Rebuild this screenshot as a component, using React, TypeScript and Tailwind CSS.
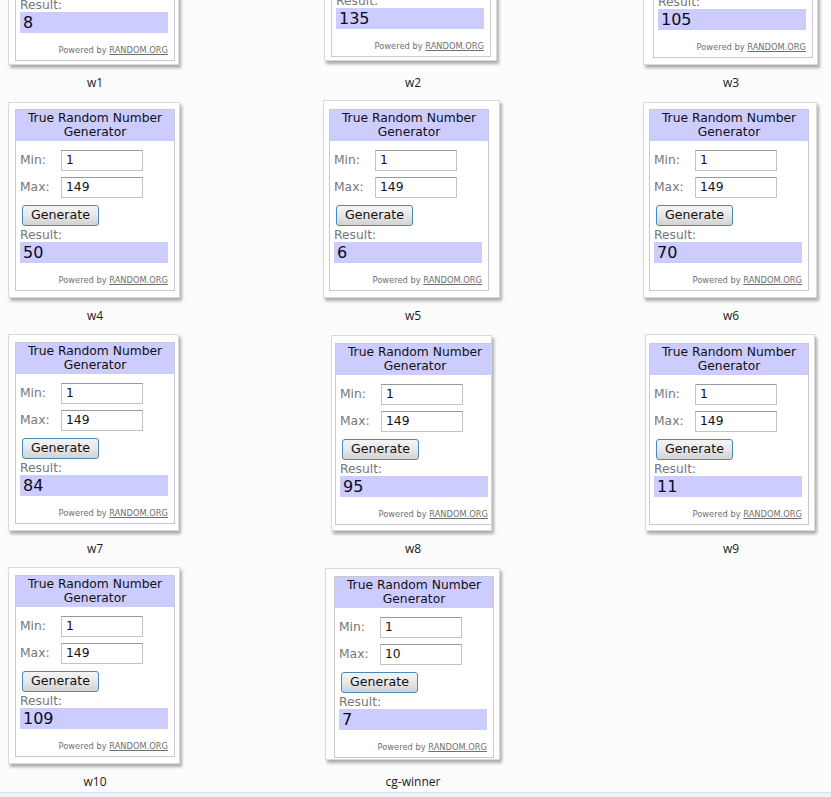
import React from "react"

type Thumb = {
  name: string
  min: string
  max: string
  result: string
  // card placement inside its cell, written out as whole class names
  card: string
  pad: string
}

const rows: Thumb[][] = [
  [
    { name: "w1", min: "1", max: "149", result: "8", card: "ml-[8px] w-[171px] h-[196px]", pad: "pl-[6px] pt-[9px]" },
    { name: "w2", min: "1", max: "149", result: "135", card: "ml-[6px] w-[173px] h-[192px] mb-[4px]", pad: "pl-[6px] pt-[5px]" },
    { name: "w3", min: "1", max: "149", result: "105", card: "ml-[7px] w-[175px] h-[196px]", pad: "pl-[9px] pt-[6px]" },
  ],
  [
    { name: "w4", min: "1", max: "149", result: "50", card: "ml-[8px] w-[172px] h-[196px]", pad: "pl-[6px] pt-[6px]" },
    { name: "w5", min: "1", max: "149", result: "6", card: "ml-[5px] w-[177px] h-[198px] -mt-[2px]", pad: "pl-[5px] pt-[8px]" },
    { name: "w6", min: "1", max: "149", result: "70", card: "ml-[7px] w-[174px] h-[196px]", pad: "pl-[5px] pt-[6px]" },
  ],
  [
    { name: "w7", min: "1", max: "149", result: "84", card: "ml-[8px] w-[171px] h-[197px]", pad: "pl-[6px] pt-[7px]" },
    { name: "w8", min: "1", max: "149", result: "95", card: "ml-[13px] w-[161px] h-[196px]", pad: "pl-[3px] pt-[7px]" },
    { name: "w9", min: "1", max: "149", result: "11", card: "ml-[9px] w-[170px] h-[197px]", pad: "pl-[3px] pt-[8px]" },
  ],
  [
    { name: "w10", min: "1", max: "149", result: "109", card: "ml-[8px] w-[172px] h-[197px]", pad: "pl-[6px] pt-[7px]" },
    { name: "cg-winner", min: "1", max: "10", result: "7", card: "ml-[7px] w-[175px] h-[192px] mb-[4px]", pad: "pl-[8px] pt-[7px]" },
  ],
]

const Widget = ({ min, max, result }: { min: string; max: string; result: string }) => (
  <div className="flex h-[182px] w-[160px] shrink-0 flex-col border border-[#c9c9d6] bg-white font-['DejaVu_Sans',Verdana,sans-serif] text-[12.3px]">
    <div className="h-[31px] shrink-0 bg-[#ccccff] pt-[1px] text-center leading-[14px] text-[#111]">
      True Random Number
      <br />
      Generator
    </div>
    <div className="flex flex-col px-[4px]">
      {[
        ["Min:", min],
        ["Max:", max],
      ].map(([label, value], i) => (
        <div key={label} className={i === 0 ? "mt-[9px] flex h-[21px] items-center" : "mt-[6px] flex h-[21px] items-center"}>
          <span className="w-[41px] leading-none text-[#777]">{label}</span>
          <div className="flex h-[21px] w-[82px] items-center border border-[#c3c3c3] border-t-[#999] pl-[4px] leading-none text-[#111]">
            {value}
          </div>
        </div>
      ))}
      <button
        type="button"
        className="ml-[2px] mt-[7px] h-[21px] w-[77px] rounded-[3px] border border-[#4a8ab8] bg-gradient-to-b from-[#f4f4f4] via-[#e8e8e8] to-[#d2d2d2] text-center text-[12.6px] leading-none text-[#111]"
      >
        Generate
      </button>
      <div className="mt-[3px] h-[13px] leading-[13px] text-[#777]">Result:</div>
      <div className="flex h-[21px] w-[148px] items-center bg-[#ccccff] pl-[3px] text-[16px] leading-none text-[#0a0a24]">
        {result}
      </div>
      <div className="mt-[12px] w-[148px] text-right text-[8.3px] leading-[10px] text-[#707070]">
        Powered by <span className="underline">RANDOM.ORG</span>
      </div>
    </div>
  </div>
)

const Cell = ({ t }: { t: Thumb }) => (
  <div className="flex w-[190px] flex-col">
    <div className="flex h-[196px] items-end">
      <div
        className={`${t.card} ${t.pad} box-border flex overflow-hidden border border-[#dadada] bg-white shadow-[2px_3px_3px_rgba(0,0,0,0.32)]`}
      >
        <Widget min={t.min} max={t.max} result={t.result} />
      </div>
    </div>
    <div className="mt-[10px] h-[16px] text-center font-['Open_Sans',sans-serif] text-[12px] leading-[16px] text-[#1a1a1a]">
      {t.name}
    </div>
  </div>
)

export default function App() {
  return (
    <div className="flex h-[797px] w-[831px] flex-col overflow-hidden bg-[#fcfcfd]">
      <div className="flex-1 overflow-hidden">
        <div className="-mt-[131px] flex flex-col gap-y-[11px]">
          {rows.map((row, i) => (
            <div key={i} className="flex gap-x-[128px]">
              {row.map((t) => (
                <Cell key={t.name} t={t} />
              ))}
            </div>
          ))}
        </div>
      </div>
      <div className="h-[5px] shrink-0 border-t border-[#d6e1f0] bg-[#edf2f9]" />
    </div>
  )
}
